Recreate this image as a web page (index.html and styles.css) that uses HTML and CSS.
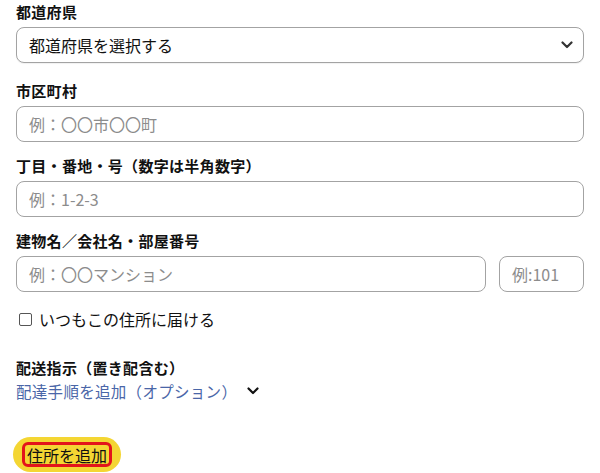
FILE: index.html
```html
<!DOCTYPE html>
<html lang="ja">
<head>
<meta charset="utf-8">
<title>住所</title>
<link rel="stylesheet" href="styles.css">
</head>
<body>
<form class="form">
  <div class="group group-first">
    <label class="label">都道府県</label>
    <div class="select">
      <span class="select-text">都道府県を選択する</span>
      <svg class="select-arrow" width="12" height="8" viewBox="0 0 12 8"><path d="M1.5 1.5 L6 6 L10.5 1.5" fill="none" stroke="#333" stroke-width="2.2" stroke-linecap="round" stroke-linejoin="round"/></svg>
    </div>
  </div>
  <div class="group">
    <label class="label">市区町村</label>
    <div class="input"><span class="ph">例：〇〇市〇〇町</span></div>
  </div>
  <div class="group">
    <label class="label">丁目・番地・号（数字は半角数字）</label>
    <div class="input"><span class="ph">例：1-2-3</span></div>
  </div>
  <div class="group">
    <label class="label">建物名／会社名・部屋番号</label>
    <div class="row">
      <div class="input input-grow"><span class="ph">例：〇〇マンション</span></div>
      <div class="input input-room"><span class="ph">例:101</span></div>
    </div>
  </div>
  <div class="check-row">
    <span class="checkbox"></span>
    <span class="check-text">いつもこの住所に届ける</span>
  </div>
  <div class="delivery">
    <div class="label">配送指示（置き配含む）</div>
    <div class="link-row">
      <span class="link">配達手順を追加（オプション）</span>
      <svg class="link-arrow" width="12" height="8" viewBox="0 0 12 8"><path d="M1.5 1.5 L6 6 L10.5 1.5" fill="none" stroke="#111" stroke-width="2.2" stroke-linecap="round" stroke-linejoin="round"/></svg>
    </div>
  </div>
  <div class="btn-wrap">
    <span class="btn"><span class="btn-inner">住所を追加</span></span>
  </div>
</form>
</body>
</html>
```
FILE: styles.css
```css
* { box-sizing: border-box; }
html, body { margin: 0; padding: 0; background: #fff; }
body {
  font-family: "Noto Sans CJK JP", "Noto Sans", sans-serif;
  font-size: 16px;
  color: #111;
}
.form {
  padding: 2px 16px 0 16px;
  width: 600px;
}
.group { margin-bottom: 14px; }
.group-first { margin-bottom: 18px; }
.label {
  display: block;
  font-weight: bold;
  font-size: 15px;
  line-height: 20px;
  height: 20px;
  margin-bottom: 5px;
  color: #111;
  letter-spacing: 0.3px;
}
.select, .input {
  height: 36px;
  border: 1px solid #a3a3a3;
  border-radius: 8px;
  display: flex;
  align-items: center;
  padding: 0 12px;
  background: #fff;
}
.select {
  justify-content: space-between;
  box-shadow: 0 1px 1px rgba(0,0,0,0.06);
}
.select-text { line-height: 20px; color: #111; }
.select-arrow { margin-right: -2px; }
.ph { color: #8c8c8c; line-height: 20px; }
.row { display: flex; gap: 13px; }
.input-grow { flex: 1; }
.input-room { width: 85px; flex: none; }
.check-row {
  display: flex;
  align-items: center;
  margin-top: 17px;
  padding-left: 3px;
  height: 20px;
}
.checkbox {
  width: 13px;
  height: 13px;
  border: 1px solid #555;
  border-radius: 2px;
  margin-right: 7px;
  margin-top: 1px;
}
.check-text { line-height: 20px; }
.delivery { margin-top: 29px; }
.delivery .label { margin-bottom: 0; }
.link-row {
  display: flex;
  align-items: center;
  height: 21px;
  margin-top: 2px;
}
.link { color: #4a66a8; line-height: 20px; font-size: 15.5px; letter-spacing: 0.3px; }
.link-arrow { margin-left: 10px; }
.btn-wrap { margin-top: 36px; }
.btn {
  display: inline-flex;
  align-items: center;
  justify-content: center;
  height: 35px;
  width: 108px;
  border-radius: 18px;
  background: #f4d633;
  margin-left: -3px;
}
.btn-inner {
  border: 3px solid #e3141b;
  border-radius: 6px;
  padding: 0 2px;
  line-height: 18px;
  height: 25px;
  display: inline-flex;
  align-items: center;
  color: #111;
}
```
